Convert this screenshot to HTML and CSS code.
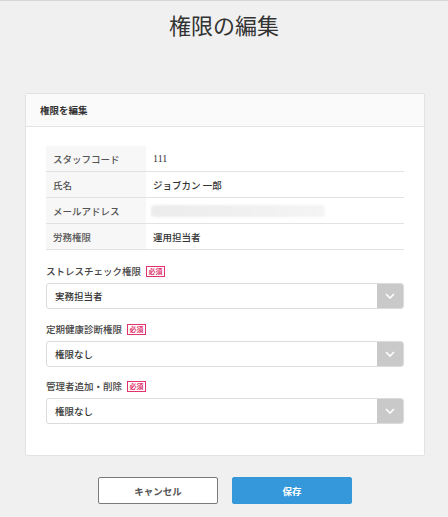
FILE: index.html
```html
<!DOCTYPE html>
<html lang="ja">
<head>
<meta charset="utf-8">
<title>権限の編集</title>
<link rel="stylesheet" href="styles.css">
</head>
<body>
<div class="page">
  <h1 class="title">権限の編集</h1>
  <section class="card">
    <div class="card-header">権限を編集</div>
    <div class="card-body">
      <table class="info">
        <tr><th>スタッフコード</th><td class="num">111</td></tr>
        <tr><th>氏名</th><td>ジョブカン 一郎</td></tr>
        <tr><th>メールアドレス</th><td><div class="blur"></div></td></tr>
        <tr><th>労務権限</th><td>運用担当者</td></tr>
      </table>

      <div class="group">
        <div class="label">ストレスチェック権限<span class="req">必須</span></div>
        <div class="select"><span class="value">実務担当者</span><span class="arrow"><svg width="10" height="6" viewBox="0 0 10 6"><path d="M1 1 L5 5 L9 1" fill="none" stroke="#fff" stroke-width="1.6"/></svg></span></div>
      </div>
      <div class="group">
        <div class="label">定期健康診断権限<span class="req">必須</span></div>
        <div class="select"><span class="value">権限なし</span><span class="arrow"><svg width="10" height="6" viewBox="0 0 10 6"><path d="M1 1 L5 5 L9 1" fill="none" stroke="#fff" stroke-width="1.6"/></svg></span></div>
      </div>
      <div class="group">
        <div class="label">管理者追加・削除<span class="req">必須</span></div>
        <div class="select"><span class="value">権限なし</span><span class="arrow"><svg width="10" height="6" viewBox="0 0 10 6"><path d="M1 1 L5 5 L9 1" fill="none" stroke="#fff" stroke-width="1.6"/></svg></span></div>
      </div>
    </div>
  </section>
  <div class="actions">
    <button class="btn btn-cancel">キャンセル</button>
    <button class="btn btn-save">保存</button>
  </div>
</div>
</body>
</html>
```

FILE: styles.css
```css
html, body {
  margin: 0;
  padding: 0;
}
body {
  background: #f0f0f0;
  border-top: 1px solid #d6d6d6;
  font-family: "Noto Sans CJK JP", "Noto Sans", sans-serif;
  color: #333;
  height: 516px;
}
.page {
  display: flex;
  flex-direction: column;
  align-items: center;
}
.title {
  margin: 8px 0 0;
  font-size: 22px;
  line-height: 30px;
  font-weight: normal;
  color: #333;
}
.card {
  margin-top: 54px;
  width: 398px;
  background: #fff;
  border: 1px solid #e2e2e2;
  border-radius: 2px;
  margin-left: 2px;
}
.card-header {
  height: 32px;
  line-height: 32px;
  background: #fafafa;
  border-bottom: 1px solid #e4e4e4;
  padding-left: 14px;
  font-size: 9.5px;
  font-weight: bold;
  color: #333;
}
.card-body {
  padding: 19px 20px 31px;
}
.info {
  width: 100%;
  border-collapse: collapse;
  font-size: 9.5px;
}
.info th, .info td {
  height: 25px;
  padding: 0;
  border-bottom: 1px solid #e2e2e2;
  text-align: left;
  vertical-align: middle;
}
.info th {
  width: 100px;
  background: #f7f7f7;
  padding-left: 7px;
  box-sizing: border-box;
  font-weight: 500;
  color: #555;
}
.info td {
  padding-left: 7px;
  color: #333;
  font-weight: 500;
}
.info td.num {
  font-family: "Liberation Serif", serif;
  font-size: 10px;
  font-weight: normal;
}
.blur {
  width: 174px;
  height: 12px;
  margin-left: -2px;
  border-radius: 4px;
  background: linear-gradient(to right, #ececec, #f1f1f1 60%, #f4f4f4);
  filter: blur(1px);
}
.group {
  margin-top: 12px;
}
.info + .group {
  margin-top: 13px;
}
.group:last-child {
  margin-top: 11px;
}
.label {
  display: flex;
  align-items: center;
  height: 16px;
  font-size: 9.5px;
  font-weight: 500;
  color: #444;
  margin-bottom: 4px;
}
.req {
  margin-left: 5px;
  border: 1px solid #e2336c;
  color: #e2336c;
  font-size: 7px;
  line-height: 9px;
  padding: 0 1.5px;
  font-weight: bold;
}
.select {
  display: flex;
  height: 24px;
  border: 1px solid #dcdcdc;
  border-radius: 3px;
  overflow: hidden;
}
.select .value {
  flex: 1;
  display: flex;
  align-items: center;
  padding-left: 8px;
  font-size: 9.5px;
  font-weight: 500;
  color: #333;
}
.select .arrow {
  width: 26px;
  background: #c9c9c9;
  display: flex;
  align-items: center;
  justify-content: center;
}
.actions {
  display: flex;
  gap: 14px;
  margin-top: 21px;
  margin-left: 2px;
}
.btn {
  width: 120px;
  height: 27px;
  font-family: "Noto Sans CJK JP", "Noto Sans", sans-serif;
  font-size: 9.5px;
  font-weight: bold;
  border-radius: 2px;
  padding: 0;
  cursor: pointer;
}
.btn-cancel {
  background: #fff;
  border: 1px solid #7a7a7a;
  color: #555;
}
.btn-save {
  background: #3598db;
  border: 1px solid #3598db;
  color: #fff;
}
```
